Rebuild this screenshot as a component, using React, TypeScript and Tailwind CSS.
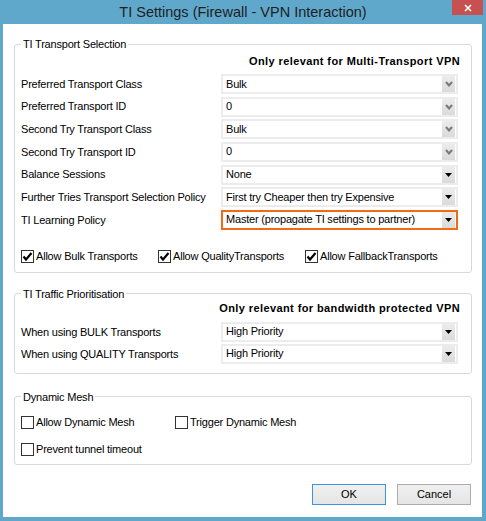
import React from 'react';

const font = { fontFamily: '"Liberation Sans", Arial, sans-serif' };

const Check = ({ checked }: { checked?: boolean }) => (
  <div className="w-[13px] h-[13px] border border-[#333333] bg-white flex-shrink-0 flex items-center justify-center">
    {checked && (
      <svg width="11" height="11" viewBox="0 0 11 11">
        <polyline points="1.5,5.5 4,8.5 9.5,2" fill="none" stroke="#000" strokeWidth="2.2" />
      </svg>
    )}
  </div>
);

const Select = ({ value, disabled, focused }: { value: string; disabled?: boolean; focused?: boolean }) => (
  <div
    className={`w-[237px] h-[20px] border-2 bg-white flex items-center ${
      focused ? 'border-[#f26a13]' : 'border-[#ececec]'
    }`}
  >
    <span className="flex-1 pl-[3px] text-[11px] tracking-[-0.2px] text-black leading-none truncate">{value}</span>
    <div className="w-[13px] h-[16px] mr-[1px] bg-gradient-to-b from-[#ececec] to-[#dadada] flex items-center justify-center">
      {disabled ? (
        <svg width="8" height="6" viewBox="0 0 8 6">
          <polyline points="1,1 4,4.5 7,1" fill="none" stroke="#7a7a7a" strokeWidth="2" />
        </svg>
      ) : (
        <svg width="7" height="4" viewBox="0 0 7 4">
          <polygon points="0,0 7,0 3.5,4" fill="#000" />
        </svg>
      )}
    </div>
  </div>
);

const Row = ({ label, children }: { label: string; children: React.ReactNode }) => (
  <div className="flex items-center h-[20px]">
    <span className="w-[200px] text-[11px] tracking-[-0.2px] text-black">{label}</span>
    {children}
  </div>
);

const Group = ({ title, className, children }: { title: string; className: string; children: React.ReactNode }) => (
  <fieldset className={`border border-[#d9d9d9] rounded-[3px] pl-[6px] pr-[11px] ${className}`}>
    <legend className="px-[2px] text-[11px] tracking-[-0.2px] leading-[14px] text-black">{title}</legend>
    {children}
  </fieldset>
);

const CheckItem = ({ label, checked, width }: { label: string; checked?: boolean; width?: string }) => (
  <label className={`flex items-center gap-[2px] ${width ?? ''}`}>
    <Check checked={checked} />
    <span className="text-[11px] tracking-[-0.2px] text-black leading-none">{label}</span>
  </label>
);

export default function App() {
  const transportRows = [
    { label: 'Preferred Transport Class', value: 'Bulk', disabled: true },
    { label: 'Preferred Transport ID', value: '0', disabled: true },
    { label: 'Second Try Transport Class', value: 'Bulk', disabled: true },
    { label: 'Second Try Transport ID', value: '0', disabled: true },
    { label: 'Balance Sessions', value: 'None' },
    { label: 'Further Tries Transport Selection Policy', value: 'First try Cheaper then try Expensive' },
    { label: 'TI Learning Policy', value: 'Master (propagate TI settings to partner)', focused: true },
  ];

  return (
    <div className="w-[486px] h-[521px] bg-[#5fa8cb] flex flex-col" style={font}>
      {/* Title bar */}
      <div className="relative h-[24px] flex items-center justify-center">
        <span className="text-[14.5px] text-[#1e1e1e] leading-none">TI Settings (Firewall - VPN Interaction)</span>
        <div className="absolute top-0 right-[3px] w-[31px] h-[15px] bg-[#c75050] flex items-center justify-center">
          <svg width="8" height="8" viewBox="0 0 8 8">
            <path d="M1 1 L7 7 M7 1 L1 7" stroke="#fff" strokeWidth="1.6" />
          </svg>
        </div>
      </div>

      {/* Client area */}
      <div className="flex-1 ml-[3px] mr-[4px] mb-[4px] bg-white pl-[11px] pr-[10px] flex flex-col">
        <Group title="TI Transport Selection" className="mt-[13px] pb-[9px]">
          <div className="mt-[3px] h-[14px] leading-[14px] text-right text-[11px] font-bold tracking-[0.4px] text-black">
            Only relevant for Multi-Transport VPN
          </div>
          <div className="mt-[6px] flex flex-col gap-[2.67px]">
            {transportRows.map((r, i) => (
              <Row key={i} label={r.label}>
                <Select value={r.value} disabled={r.disabled} focused={r.focused} />
              </Row>
            ))}
          </div>
          <div className="mt-[20px] flex items-center h-[13px]">
            <CheckItem label="Allow Bulk Transports" checked width="w-[137px]" />
            <CheckItem label="Allow QualityTransports" checked width="w-[147px]" />
            <CheckItem label="Allow FallbackTransports" checked />
          </div>
        </Group>

        <Group title="TI Traffic Prioritisation" className="mt-[14px] pb-[9px]">
          <div className="h-[14px] leading-[14px] text-right text-[11px] font-bold tracking-[0.4px] text-black">
            Only relevant for bandwidth protected VPN
          </div>
          <div className="mt-[7px] flex flex-col gap-[2px]">
            <Row label="When using BULK Transports">
              <Select value="High Priority" />
            </Row>
            <Row label="When using QUALITY Transports">
              <Select value="High Priority" />
            </Row>
          </div>
        </Group>

        <Group title="Dynamic Mesh" className="mt-[16px] pb-[8px]">
          <div className="mt-[12px] flex items-center h-[13px]">
            <CheckItem label="Allow Dynamic Mesh" width="w-[154px]" />
            <CheckItem label="Trigger Dynamic Mesh" />
          </div>
          <div className="mt-[14px] flex items-center h-[13px]">
            <CheckItem label="Prevent tunnel timeout" />
          </div>
        </Group>

        <div className="mt-[19px] flex justify-end gap-[11px] mr-[1px]">
          <button className="w-[74px] h-[21px] border border-[#3c93e0] bg-gradient-to-b from-[#f0f0f0] to-[#e5e5e5] text-[11px] text-black">
            OK
          </button>
          <button className="w-[74px] h-[21px] border border-[#acacac] bg-gradient-to-b from-[#f0f0f0] to-[#e5e5e5] text-[11px] text-black">
            Cancel
          </button>
        </div>
      </div>
    </div>
  );
}
